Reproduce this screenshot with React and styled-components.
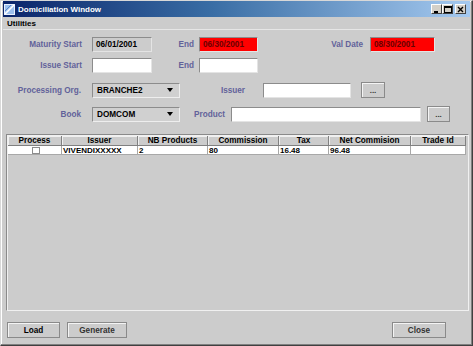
import React from 'react'
import styled, { createGlobalStyle } from 'styled-components'

const GlobalStyle = createGlobalStyle`
  html, body {
    margin: 0;
    padding: 0;
    background: #cccccc;
  }
  body {
    font-family: "Liberation Sans", Arial, sans-serif;
  }
`

const columns = [
  { title: 'Process', w: 54 },
  { title: 'Issuer', w: 76 },
  { title: 'NB Products', w: 70 },
  { title: 'Commission', w: 71 },
  { title: 'Tax', w: 50 },
  { title: 'Net Commision', w: 82 },
  { title: 'Trade Id', w: 55 }
]

const rows = [
  { issuer: 'VIVENDIXXXXX', nb: '2', commission: '80', tax: '16.48', net: '96.48', trade: '' }
]

const App = () => (
  <>
    <GlobalStyle />
    <Frame>
      <TitleBar>
        <TitleIcon viewBox='0 0 11 11'>
          <rect x='0.5' y='0.5' width='10' height='10' fill='#9cc0ee' stroke='#e8f0ff' />
          <path d='M1 10 L10 1' stroke='#ffffff' strokeWidth='1.6' />
          <path d='M1 7 L7 1' stroke='#5d86c8' strokeWidth='1' />
        </TitleIcon>
        <TitleText>Domiciliation Window</TitleText>
        <CaptionButtons>
          <CapButton>
            <svg width='7' height='7' viewBox='0 0 7 7'><rect x='1' y='5' width='4' height='2' fill='#000' /></svg>
          </CapButton>
          <CapButton>
            <svg width='8' height='7' viewBox='0 0 8 7'><rect x='0.5' y='0.5' width='7' height='6' fill='none' stroke='#000' /><rect x='0' y='0' width='8' height='2' fill='#000' /></svg>
          </CapButton>
          <CapButton $gap>
            <svg width='7' height='7' viewBox='0 0 7 7'><path d='M1 1 L6 6 M6 1 L1 6' stroke='#000' strokeWidth='1.4' /></svg>
          </CapButton>
        </CaptionButtons>
      </TitleBar>
      <MenuBar>
        <MenuItem>Utilities</MenuItem>
      </MenuBar>
      <Content>
        <Row $mt={7} $h={15}>
          <Label $w={89} $pr={10}>Maturity Start</Label>
          <Field $w={60} $tone='disabled'>06/01/2001</Field>
          <Label $w={47} $pr={5}>End</Label>
          <Field $w={59} $tone='alert'>06/30/2001</Field>
          <Label $w={112} $pr={7}>Val Date</Label>
          <Field $w={65} $tone='alert'>08/30/2001</Field>
        </Row>
        <Row $mt={6} $h={15}>
          <Label $w={89} $pr={10}>Issue Start</Label>
          <Field $w={60} />
          <Label $w={47} $pr={5}>End</Label>
          <Field $w={59} />
        </Row>
        <Row $mt={9} $h={16}>
          <Label $w={89} $pr={11}>Processing Org.</Label>
          <Combo $w={88}>
            <span>BRANCHE2</span>
            <Arrow />
          </Combo>
          <Label $w={83} $pr={18}>Issuer</Label>
          <Field $w={88} />
          <SmallButton $ml={10} $w={24}>...</SmallButton>
        </Row>
        <Row $mt={8} $h={16}>
          <Label $w={89} $pr={11}>Book</Label>
          <Combo $w={88}>
            <span>DOMCOM</span>
            <Arrow />
          </Combo>
          <Label $w={51} $pr={6}>Product</Label>
          <Field $w={190} />
          <SmallButton $ml={6} $w={23}>...</SmallButton>
        </Row>
        <TablePane>
          <Grid>
            {columns.map((c) => (
              <HeadCell key={c.title}>{c.title}</HeadCell>
            ))}
            {rows.map((r) => (
              <React.Fragment key={r.issuer}>
                <Cell $center><CheckBox /></Cell>
                <Cell>{r.issuer}</Cell>
                <Cell>{r.nb}</Cell>
                <Cell>{r.commission}</Cell>
                <Cell>{r.tax}</Cell>
                <Cell>{r.net}</Cell>
                <Cell>{r.trade}</Cell>
              </React.Fragment>
            ))}
          </Grid>
        </TablePane>
        <ButtonBar>
          <Button $w={53}>Load</Button>
          <Button $w={60} $light>Generate</Button>
          <Spacer />
          <Button $w={54} $light>Close</Button>
        </ButtonBar>
      </Content>
    </Frame>
  </>
)

const Frame = styled.div`
  box-sizing: border-box;
  width: 473px;
  height: 346px;
  display: flex;
  flex-direction: column;
  background: #cccccc;
  border: 1px solid;
  border-color: #d8d8d8 #404040 #404040 #d8d8d8;
  padding: 0 2px 2px 2px;
  box-shadow: inset -1px -1px 0 #808080, inset 1px 1px 0 #ffffff;
`

const TitleBar = styled.div`
  height: 16px;
  display: flex;
  align-items: center;
  padding: 0 4px 0 1px;
  background: linear-gradient(to right, #0a246a 0%, #3a6ea5 45%, #a6caf0 100%);
`

const TitleIcon = styled.svg`
  width: 11px;
  height: 11px;
  margin-right: 3px;
`

const TitleText = styled.div`
  flex: 1;
  color: #ffffff;
  font-weight: bold;
  font-size: 8px;
`

const CaptionButtons = styled.div`
  display: flex;
  align-items: center;
`

const CapButton = styled.div`
  box-sizing: border-box;
  width: 11px;
  height: 10px;
  margin-left: ${(p) => (p.$gap ? '2px' : '0')};
  background: #d4d0c8;
  border: 1px solid;
  border-color: #ffffff #404040 #404040 #ffffff;
  display: flex;
  align-items: center;
  justify-content: center;
`

const MenuBar = styled.div`
  height: 12px;
  display: flex;
  align-items: center;
  border-bottom: 1px solid #e6e6e6;
`

const MenuItem = styled.div`
  font-size: 8px;
  font-weight: bold;
  color: #000000;
  padding-left: 4px;
`

const Content = styled.div`
  flex: 1;
  display: flex;
  flex-direction: column;
`

const Row = styled.div`
  display: flex;
  align-items: center;
  height: ${(p) => p.$h}px;
  margin-top: ${(p) => p.$mt}px;
`

const Label = styled.div`
  box-sizing: border-box;
  width: ${(p) => p.$w}px;
  padding-right: ${(p) => p.$pr}px;
  text-align: right;
  font-size: 8.2px;
  font-weight: bold;
  color: #62629a;
  white-space: nowrap;
`

const tones = {
  plain: { bg: '#ffffff', fg: '#000000' },
  disabled: { bg: '#cccccc', fg: '#000000' },
  alert: { bg: '#ff0000', fg: '#6a0000' }
}

const Field = styled.div`
  box-sizing: border-box;
  width: ${(p) => p.$w}px;
  height: 15px;
  padding-left: 3px;
  display: flex;
  align-items: center;
  font-size: 8.2px;
  font-weight: bold;
  background: ${(p) => tones[p.$tone || 'plain'].bg};
  color: ${(p) => tones[p.$tone || 'plain'].fg};
  border: 1px solid;
  border-color: #8c8c8c #e4e4e4 #e4e4e4 #8c8c8c;
`

const Combo = styled.div`
  box-sizing: border-box;
  width: ${(p) => p.$w}px;
  height: 15px;
  padding: 0 4px 0 4px;
  display: flex;
  align-items: center;
  justify-content: space-between;
  font-size: 8.2px;
  font-weight: bold;
  color: #000000;
  background: #d0d0d0;
  border: 1px solid;
  border-color: #8c8c8c #eeeeee #eeeeee #8c8c8c;
`

const Arrow = styled.div`
  width: 0;
  height: 0;
  border-left: 3.5px solid transparent;
  border-right: 3.5px solid transparent;
  border-top: 4px solid #000000;
  margin-right: 2px;
`

const SmallButton = styled.div`
  box-sizing: border-box;
  width: ${(p) => p.$w}px;
  height: 16px;
  margin-left: ${(p) => p.$ml}px;
  display: flex;
  align-items: center;
  justify-content: center;
  font-size: 8px;
  font-weight: bold;
  color: #333333;
  background: #cccccc;
  border: 1px solid #8a8a8a;
  box-shadow: inset 1px 1px 0 #f4f4f4;
`

const TablePane = styled.div`
  box-sizing: border-box;
  height: 177px;
  margin: 12px 1px 0 3px;
  padding: 1px;
  border: 1px solid;
  border-color: #8a8a8a #f0f0f0 #f0f0f0 #8a8a8a;
  box-shadow: inset 1px 1px 0 #f0f0f0;
  background: #cccccc;
`

const Grid = styled.div`
  display: grid;
  grid-template-columns: ${columns.map((c) => `${c.w}px`).join(' ')};
  grid-auto-rows: 9px;
  grid-template-rows: 10px;
`

const HeadCell = styled.div`
  box-sizing: border-box;
  display: flex;
  align-items: center;
  justify-content: center;
  font-size: 8.2px;
  font-weight: bold;
  color: #000000;
  background: #cccccc;
  border-right: 1px solid #808080;
  border-bottom: 1px solid #808080;
  box-shadow: inset 1px 1px 0 #f0f0f0;
  white-space: nowrap;
`

const Cell = styled.div`
  box-sizing: border-box;
  display: flex;
  align-items: center;
  justify-content: ${(p) => (p.$center ? 'center' : 'flex-start')};
  padding-left: ${(p) => (p.$center ? 0 : 1)}px;
  font-size: 8px;
  font-weight: bold;
  color: #000000;
  background: #ffffff;
  border-right: 1px solid #a8a8a8;
  border-bottom: 1px solid #a8a8a8;
  white-space: nowrap;
`

const CheckBox = styled.div`
  box-sizing: border-box;
  width: 8px;
  height: 7px;
  margin-left: 2px;
  background: #ffffff;
  border: 1px solid #8c8c8c;
`

const ButtonBar = styled.div`
  display: flex;
  gap: 7px;
  margin-top: 11px;
  padding: 0 24px 0 4px;
`

const Spacer = styled.div`
  flex: 1;
`

const Button = styled.div`
  box-sizing: border-box;
  width: ${(p) => p.$w}px;
  height: 16px;
  display: flex;
  align-items: center;
  justify-content: center;
  font-size: 8.2px;
  font-weight: bold;
  color: ${(p) => (p.$light ? '#333333' : '#000000')};
  background: #cccccc;
  border: 1px solid #8a8a8a;
  box-shadow: inset 1px 1px 0 #f4f4f4;
`

export default App
